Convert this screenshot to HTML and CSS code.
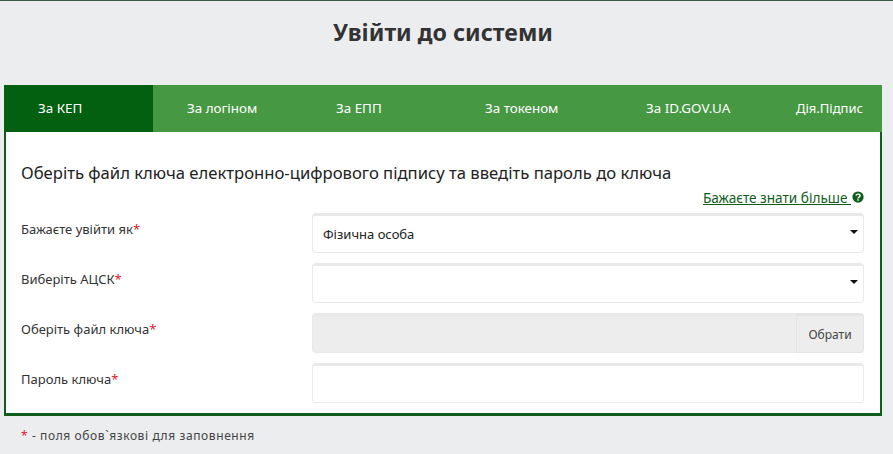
FILE: index.html
```html
<!DOCTYPE html>
<html lang="uk">
<head>
    <meta charset="UTF-8">
    <title>Увійти до системи</title>
    <link rel="stylesheet" href="styles.css">
</head>
<body>
    <h1 class="page-title">Увійти до системи</h1>

    <div class="tabs">
        <a class="tab active">За КЕП</a>
        <a class="tab">За логіном</a>
        <a class="tab">За ЕПП</a>
        <a class="tab">За токеном</a>
        <a class="tab">За ID.GOV.UA</a>
        <a class="tab last">Дія.Підпис</a>
    </div>

    <div class="panel">
        <h2 class="panel-title">Оберіть файл ключа електронно-цифрового підпису та введіть пароль до ключа</h2>
        <div class="more">
            <a class="more-link">Бажаєте знати більше </a>
            <svg class="more-icon" viewBox="0 0 16 16">
                <circle cx="8" cy="8" r="7.500" fill="#0f5e1d"/>
                <path d="M5.300 6.200c.2-1.300 1.300-2 2.700-2 1.500 0 2.700.9 2.700 2.200 0 1.900-2.700 1.800-2.700 3.700" fill="none" stroke="#fff" stroke-width="1.900"/>
                <rect x="7" y="11" width="2" height="1.900" fill="#fff"/>
            </svg>
        </div>

        <form class="form">
            <div class="form-row">
                <label>Бажаєте увійти як<span class="req">*</span></label>
                <div class="select-wrap">
                    <select class="control">
                        <option>Фізична особа</option>
                    </select>
                </div>
            </div>
            <div class="form-row">
                <label>Виберіть АЦСК<span class="req">*</span></label>
                <div class="select-wrap">
                    <select class="control">
                        <option></option>
                    </select>
                </div>
            </div>
            <div class="form-row">
                <label>Оберіть файл ключа<span class="req">*</span></label>
                <div class="file-group">
                    <input class="control file-input" type="text" disabled>
                    <button class="file-btn" type="button">Обрати</button>
                </div>
            </div>
            <div class="form-row">
                <label>Пароль ключа<span class="req">*</span></label>
                <input class="control" type="password">
            </div>
        </form>
    </div>

    <p class="note"><span class="req">*</span> - поля обов`язкові для заповнення</p>
</body>
</html>
```

FILE: styles.css
```css
body {
    margin: 0;
    height: 454px;
    overflow: hidden;
    background-color: #ecedef;
    border-top: 1px solid #3c5a4a;
    font-family: "Noto Sans", "Open Sans", sans-serif;
    color: #333;
}
.page-title {
    margin: 0;
    padding: 15px 7px 0 0;
    height: 69px;
    line-height: 32px;
    text-align: center;
    font-size: 23.2px;
    font-weight: bold;
    color: #333;
}
.tabs {
    display: grid;
    grid-template-columns: 149px 149px 149px 161px 150px 120px;
    margin: 0 11px 0 4px;
    height: 47px;
    background-color: #479843;
}
.tab {
    padding-left: 34px;
    line-height: 47px;
    font-size: 13.4px;
    color: white;
}
.tab.last {
    font-size: 13px;
}
.tab.active {
    background-color: #036011;
}
.panel {
    margin: 0 11px 0 4px;
    height: 284px;
    box-sizing: border-box;
    padding: 30px 16px 0 15px;
    background: white;
    border: 2px solid #0f5e1d;
    border-top: none;
    border-bottom-width: 3px;
}
.panel-title {
    margin: 0;
    line-height: 22px;
    font-size: 16.65px;
    font-weight: normal;
    color: #222;
}
.more {
    display: flex;
    justify-content: flex-end;
    align-items: center;
    height: 20px;
    margin-top: 3px;
    margin-bottom: 6px;
}
.more-link {
    font-size: 13.6px;
    color: #0f5e1d;
    text-decoration: underline;
    white-space: pre;
}
.more-icon {
    width: 12px;
    height: 12px;
    margin-left: 1px;
}
.form-row {
    display: grid;
    grid-template-columns: 291px 1fr;
    height: 40px;
    margin-bottom: 10px;
}
.form-row label {
    padding-top: 7px;
    line-height: 18px;
    font-size: 13px;
    color: #333;
}
.req {
    color: #d9232e;
}
.control {
    display: block;
    width: 100%;
    height: 40px;
    box-sizing: border-box;
    padding: 0 10px;
    background: white;
    border: 1px solid #e9e9e9;
    border-top: 3px solid #e9e9e9;
    border-radius: 4px;
    font-family: inherit;
    font-size: 13px;
    color: #222;
    appearance: none;
}
.select-wrap {
    position: relative;
}
.select-wrap::after {
    content: "";
    position: absolute;
    top: 17px;
    right: 6px;
    border-top: 4px solid #111;
    border-left: 4px solid transparent;
    border-right: 4px solid transparent;
}
.file-group {
    display: flex;
}
.file-input {
    flex: 1;
    min-width: 0;
    background: #ededed;
    border-radius: 4px 0 0 4px;
    border-right: none;
}
.file-btn {
    width: 68px;
    height: 40px;
    padding: 0;
    background: #ededed;
    border: 1px solid #e4e4e4;
    border-top: 3px solid #e4e4e4;
    border-radius: 0 4px 4px 0;
    font-family: inherit;
    font-size: 12px;
    color: #444;
}
.note {
    margin: 11px 0 0 21px;
    line-height: 18px;
    font-size: 12px;
    letter-spacing: 0.6px;
    color: #444;
}
```
